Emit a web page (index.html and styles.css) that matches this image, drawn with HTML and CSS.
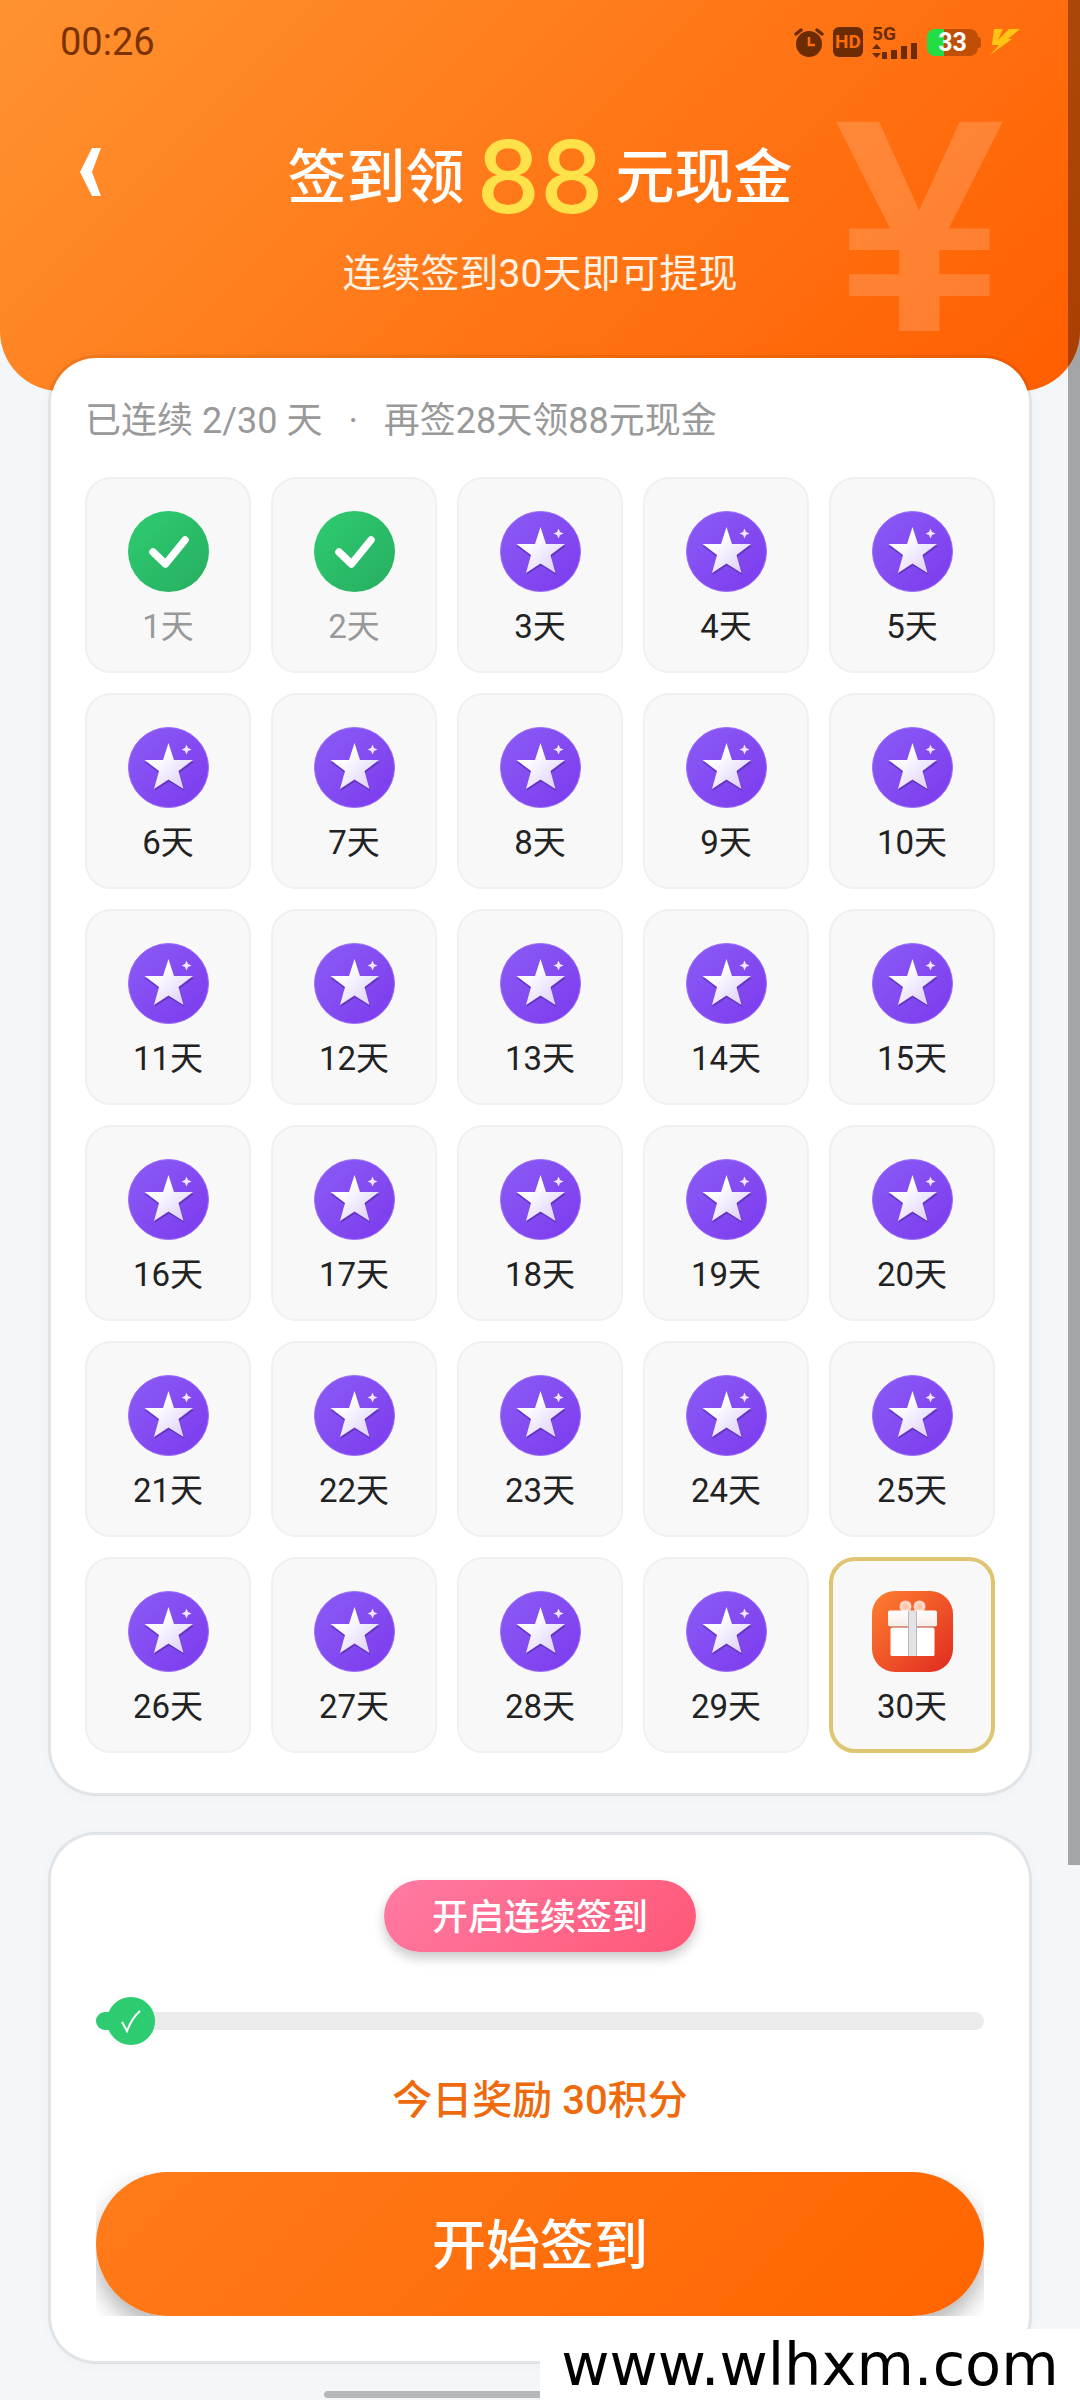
FILE: index.html
```html
<!DOCTYPE html>
<html lang="zh-CN">
<head>
    <meta charset="UTF-8">
    <meta name="viewport" content="width=device-width, initial-scale=1.0">
    <title>签到领现金</title>
    <link rel="stylesheet" href="styles.css">
</head>
<body>
    <!-- Shared icons -->
    <svg class="sprite" width="0" height="0" aria-hidden="true">
        <defs>
            <linearGradient id="green" x1="0" y1="0" x2="1" y2="1">
                <stop offset="0" stop-color="#2ecc71"/>
                <stop offset="1" stop-color="#27ae60"/>
            </linearGradient>
            <linearGradient id="purple" x1="0" y1="0" x2="1" y2="1">
                <stop offset="0" stop-color="#8b5cf6"/>
                <stop offset="1" stop-color="#7c3aed"/>
            </linearGradient>
            <linearGradient id="silver" x1="0" y1="0" x2="1" y2="1">
                <stop offset="0.3" stop-color="#ffffff"/>
                <stop offset="1" stop-color="#d9c9fb"/>
            </linearGradient>
            <linearGradient id="red" x1="0" y1="0" x2="1" y2="1">
                <stop offset="0" stop-color="#ff8030"/>
                <stop offset="1" stop-color="#e02a20"/>
            </linearGradient>
            <linearGradient id="lid" x1="0" y1="0" x2="0" y2="1">
                <stop offset="0" stop-color="#ffffff"/>
                <stop offset="1" stop-color="#f6ece8"/>
            </linearGradient>
        </defs>
        <symbol id="icon-done" viewBox="0 0 81 81">
            <circle cx="40.5" cy="40.5" r="40.5" fill="url(#green)"/>
            <path d="M25 41 37.5 53 57 29" fill="none" stroke="#fff" stroke-width="7.5" stroke-linecap="round" stroke-linejoin="round"/>
        </symbol>
        <symbol id="icon-star" viewBox="0 0 81 81">
            <circle cx="40.5" cy="40.5" r="40" fill="url(#purple)" stroke="#9a6cf8"/>
            <path d="M41 18 46.500 35 66 35 51 46 56.500 64 41 54.500 26.500 64 31 46 16.500 35 35.500 35z" fill="#4c2a9e" opacity="0.6"/>
            <path d="M40.500 16 46 33 65 33 50.500 44 55.500 62 40.500 52.500 26 62 31 44 16.500 33 35 33z" fill="url(#silver)"/>
            <path d="M58.500 17.500 60 21 63.500 22.500 60 24 58.500 27.500 57 24 53.500 22.500 57 21z" fill="#efe6ff"/>
        </symbol>
        <symbol id="icon-gift" viewBox="0 0 81 81">
            <rect width="81" height="81" rx="23" fill="url(#red)"/>
            <rect x="18.500" y="34" width="44" height="4" fill="#a3301c" opacity="0.7"/>
            <circle cx="33.500" cy="15.500" r="6" fill="#ffd9c8"/>
            <circle cx="47.500" cy="15.500" r="6" fill="#ffd9c8"/>
            <circle cx="33.500" cy="15.500" r="3" fill="#ffc4aa"/>
            <circle cx="47.500" cy="15.500" r="3" fill="#ffc4aa"/>
            <rect x="18.500" y="36.500" width="44" height="28.500" rx="1.500" fill="#fff"/>
            <rect x="16" y="19.500" width="49" height="16" rx="2" fill="url(#lid)"/>
            <path d="M36.500 20h8v45h-8z" fill="#e3e3e6"/>
            <path d="M36.500 20v45M44.500 20v45" stroke="#b9b9bf"/>
        </symbol>
    </svg>

    <div class="page">
        <header class="header">
            <div class="status-bar">
                <span class="clock">00:26</span>
                <div class="status-icons">
                    <svg width="30" height="30" viewBox="0 0 30 30">
                        <circle cx="15" cy="17" r="13" fill="#6b2c03"/>
                        <path d="M2 7 7 3M28 7l-5-4" stroke="#6b2c03" stroke-width="3.500" stroke-linecap="round"/>
                        <path d="M15 10v8h6" fill="none" stroke="#ff6d0c" stroke-width="2.500"/>
                    </svg>
                    <span class="hd">HD</span>
                    <div class="signal">
                        <span class="net">5G</span>
                        <svg width="46" height="16" viewBox="0 0 46 16">
                            <path d="M0 6h9L4.500 1zM0 10h9l-4.500 5zM10 9h5v7h-5zM19 7h6v9h-6zM29 3h6v13h-6zM39 0h6v16h-6z" fill="#6b2c03"/>
                        </svg>
                    </div>
                    <span class="battery">33</span>
                    <svg width="30" height="26" viewBox="0 0 30 26">
                        <path d="M4 0h9L8 11 19 0h11L18 10h4L0 26 9 16H2z" fill="#ffc414"/>
                    </svg>
                </div>
            </div>
            <span class="yuan" aria-hidden="true">¥</span>
            <div class="title-row">
                <button class="back" type="button" aria-label="返回">
                    <svg width="21" height="48" viewBox="0 0 21 48"><path d="M12 0h9l-9 24 9 24h-9L0 24z" fill="#fff"/></svg>
                </button>
                <h1 class="title">签到领<span class="amount">88</span>元现金</h1>
            </div>
            <p class="subtitle">连续签到30天即可提现</p>
        </header>

        <main class="content">
            <section class="card calendar">
                <p class="streak"><span>已连续 2/30 天</span><span>·</span><span>再签28天领88元现金</span></p>
                <ol class="days">
                    <li class="day done"><svg><use href="#icon-done"/></svg>1天</li>
                    <li class="day done"><svg><use href="#icon-done"/></svg>2天</li>
                    <li class="day"><svg><use href="#icon-star"/></svg>3天</li>
                    <li class="day"><svg><use href="#icon-star"/></svg>4天</li>
                    <li class="day"><svg><use href="#icon-star"/></svg>5天</li>
                    <li class="day"><svg><use href="#icon-star"/></svg>6天</li>
                    <li class="day"><svg><use href="#icon-star"/></svg>7天</li>
                    <li class="day"><svg><use href="#icon-star"/></svg>8天</li>
                    <li class="day"><svg><use href="#icon-star"/></svg>9天</li>
                    <li class="day"><svg><use href="#icon-star"/></svg>10天</li>
                    <li class="day"><svg><use href="#icon-star"/></svg>11天</li>
                    <li class="day"><svg><use href="#icon-star"/></svg>12天</li>
                    <li class="day"><svg><use href="#icon-star"/></svg>13天</li>
                    <li class="day"><svg><use href="#icon-star"/></svg>14天</li>
                    <li class="day"><svg><use href="#icon-star"/></svg>15天</li>
                    <li class="day"><svg><use href="#icon-star"/></svg>16天</li>
                    <li class="day"><svg><use href="#icon-star"/></svg>17天</li>
                    <li class="day"><svg><use href="#icon-star"/></svg>18天</li>
                    <li class="day"><svg><use href="#icon-star"/></svg>19天</li>
                    <li class="day"><svg><use href="#icon-star"/></svg>20天</li>
                    <li class="day"><svg><use href="#icon-star"/></svg>21天</li>
                    <li class="day"><svg><use href="#icon-star"/></svg>22天</li>
                    <li class="day"><svg><use href="#icon-star"/></svg>23天</li>
                    <li class="day"><svg><use href="#icon-star"/></svg>24天</li>
                    <li class="day"><svg><use href="#icon-star"/></svg>25天</li>
                    <li class="day"><svg><use href="#icon-star"/></svg>26天</li>
                    <li class="day"><svg><use href="#icon-star"/></svg>27天</li>
                    <li class="day"><svg><use href="#icon-star"/></svg>28天</li>
                    <li class="day"><svg><use href="#icon-star"/></svg>29天</li>
                    <li class="day prize"><svg><use href="#icon-gift"/></svg>30天</li>
                </ol>
            </section>

            <section class="card checkin">
                <button class="auto-btn" type="button">开启连续签到</button>
                <div class="track" role="progressbar" aria-label="签到进度" aria-valuemin="0" aria-valuemax="30" aria-valuenow="2">
                    <div class="fill" style="width: 6.67%">
                        <span class="knob">
                            <svg width="22" height="24" viewBox="0 0 22 24"><path d="M2 13 7 22C10 14 14 7 20 2" fill="none" stroke="#fff" stroke-width="2"/></svg>
                        </span>
                    </div>
                </div>
                <p class="reward">今日奖励 30积分</p>
                <div class="start-wrap">
                    <button class="start-btn" type="button">开始签到</button>
                </div>
            </section>
        </main>

        <div class="scroll-shade"></div>
        <div class="home-bar"></div>
        <a class="site" href="#">www.wlhxm.com</a>
    </div>
</body>
</html>
```

FILE: styles.css
```css
:root {
    --bg: #f4f7fa;
    --status: #6b2c03;
    --green: #2ecc71;
    --card-radius: 48px;
}

* {
    box-sizing: border-box;
}

body {
    margin: 0;
    background: var(--bg);
    color: #222;
    font-family: Roboto, "Noto Sans CJK SC", sans-serif;
}

h1, p, ol {
    margin: 0;
    padding: 0;
}

button {
    border: none;
    padding: 0;
    font-family: inherit;
    cursor: pointer;
}

.sprite {
    position: absolute;
}

.page {
    position: relative;
    min-height: 100vh;
    padding-bottom: 37px;
    overflow: hidden;
}

/* Header */
.header {
    position: relative;
    height: 391px;
    background: linear-gradient(135deg, #ff9230, #ff5e00);
    border-radius: 0 0 60px 60px;
    color: #fff;
}

.status-bar {
    display: flex;
    justify-content: space-between;
    align-items: center;
    height: 84px;
    padding: 0 60px;
}

.clock {
    font-size: 38px;
    color: #7a3200;
}

.status-icons {
    display: flex;
    align-items: center;
    gap: 9px;
}

.hd {
    width: 30px;
    height: 30px;
    border-radius: 6px;
    background: var(--status);
    color: #ff6d0c;
    font-size: 19px;
    font-weight: 700;
    line-height: 30px;
    text-align: center;
}

.signal {
    display: flex;
    flex-direction: column;
    height: 34px;
}

.net {
    color: var(--status);
    font-size: 19px;
    font-weight: 700;
    line-height: 18px;
}

.battery {
    position: relative;
    width: 51px;
    height: 27px;
    margin-right: 3px;
    border-radius: 8px;
    background: linear-gradient(90deg, #22dd44 33%, #c04e06 33%);
    font-size: 25px;
    font-weight: 700;
    line-height: 28px;
    text-align: center;
}

.battery::after {
    content: '';
    position: absolute;
    top: 8px;
    right: -3px;
    width: 3px;
    height: 11px;
    border-radius: 0 3px 3px 0;
    background: #c04e06;
}

.yuan {
    position: absolute;
    right: 76px;
    top: 54px;
    font-family: "Liberation Sans", sans-serif;
    font-size: 304px;
    font-weight: 700;
    color: rgba(255, 255, 255, 0.17);
    line-height: 344px;
}

.title-row {
    position: relative;
    display: grid;
    grid-template-columns: 80px 1fr 80px;
    align-items: center;
    height: 176px;
    padding: 0 60px;
    margin-bottom: -14px;
}

.back {
    display: flex;
    padding: 20px;
    background: none;
}

.title {
    display: flex;
    justify-content: center;
    align-items: center;
    gap: 12px;
    font-size: 59px;
    font-weight: 500;
}

.amount {
    padding-top: 8px;
    color: #ffe14a;
    font-family: Inter, sans-serif;
    font-size: 101px;
    font-weight: 500;
    line-height: 120px;
}

.subtitle {
    position: relative;
    font-size: 39px;
    line-height: 56px;
    text-align: center;
    color: #fff3e6;
}

/* Cards */
.content {
    position: relative;
    display: flex;
    flex-direction: column;
    gap: 36px;
    margin-top: -36px;
    padding: 0 48px;
}

.card {
    background: #fff;
    background-clip: padding-box;
    border: 3px solid rgba(0, 0, 0, 0.07);
    border-radius: var(--card-radius);
    box-shadow: 0 2px 12px rgba(120, 100, 80, 0.04);
}

.calendar {
    padding: 38px 34px 40px;
}

.streak {
    display: flex;
    gap: 26px;
    margin-bottom: 31px;
    font-size: 36px;
    line-height: 50px;
    color: #999;
}

.days {
    display: grid;
    grid-template-columns: repeat(5, 1fr);
    gap: 20px;
    list-style: none;
}

.day {
    display: flex;
    flex-direction: column;
    align-items: center;
    gap: 10px;
    height: 196px;
    padding-top: 32px;
    border: 2px solid #f0f0f0;
    border-radius: 26px;
    background: #f8f8f8;
    font-size: 33px;
    line-height: 50px;
}

.day svg {
    width: 81px;
    height: 81px;
}

.done {
    color: #999;
}

.prize {
    padding-top: 30px;
    border: 4px solid #dec571;
}

/* Check-in panel */
.checkin {
    display: flex;
    flex-direction: column;
    align-items: center;
    padding: 45px;
}

.auto-btn {
    height: 72px;
    padding: 0 48px 4px;
    border-radius: 36px;
    background: linear-gradient(135deg, #ff7ba3, #ff5777);
    box-shadow: 0 6px 12px rgba(0, 0, 0, 0.22);
    color: #fff;
    font-size: 36px;
    font-weight: 500;
}

.track {
    width: 100%;
    height: 18px;
    margin: 60px 0 42px;
    border-radius: 9px;
    background: #ebebeb;
}

.fill {
    display: flex;
    justify-content: flex-end;
    align-items: center;
    height: 100%;
    border-radius: 9px;
    background: var(--green);
}

.knob {
    display: flex;
    flex-shrink: 0;
    justify-content: center;
    align-items: center;
    width: 48px;
    height: 48px;
    border-radius: 50%;
    background: var(--green);
}

.reward {
    margin-bottom: 42px;
    color: #ee6a0c;
    font-size: 40px;
    font-weight: 500;
    line-height: 58px;
}

/* Keeps the button shadow inside the button's own box */
.start-wrap {
    width: 100%;
    overflow: hidden;
}

.start-btn {
    display: block;
    width: 100%;
    height: 144px;
    padding-bottom: 6px;
    border-radius: 72px;
    background: linear-gradient(135deg, #ff7b1a, #ff6500);
    box-shadow: 0 12px 24px rgba(0, 0, 0, 0.3);
    color: #fff;
    font-size: 54px;
    font-weight: 500;
}

/* Overlays */
.scroll-shade {
    position: absolute;
    top: 0;
    right: 0;
    width: 12px;
    height: 1865px;
    background: rgba(0, 0, 0, 0.33);
}

.home-bar {
    position: absolute;
    bottom: 3px;
    left: 30%;
    width: 40%;
    height: 7px;
    border-radius: 4px;
    background: #b5b9bc;
}

.site {
    position: absolute;
    right: 0;
    bottom: 0;
    width: 50%;
    height: 72px;
    background: #fff;
    color: #000;
    font-family: "DejaVu Sans", sans-serif;
    font-size: 59px;
    line-height: 72px;
    text-align: center;
    text-decoration: none;
}
```
